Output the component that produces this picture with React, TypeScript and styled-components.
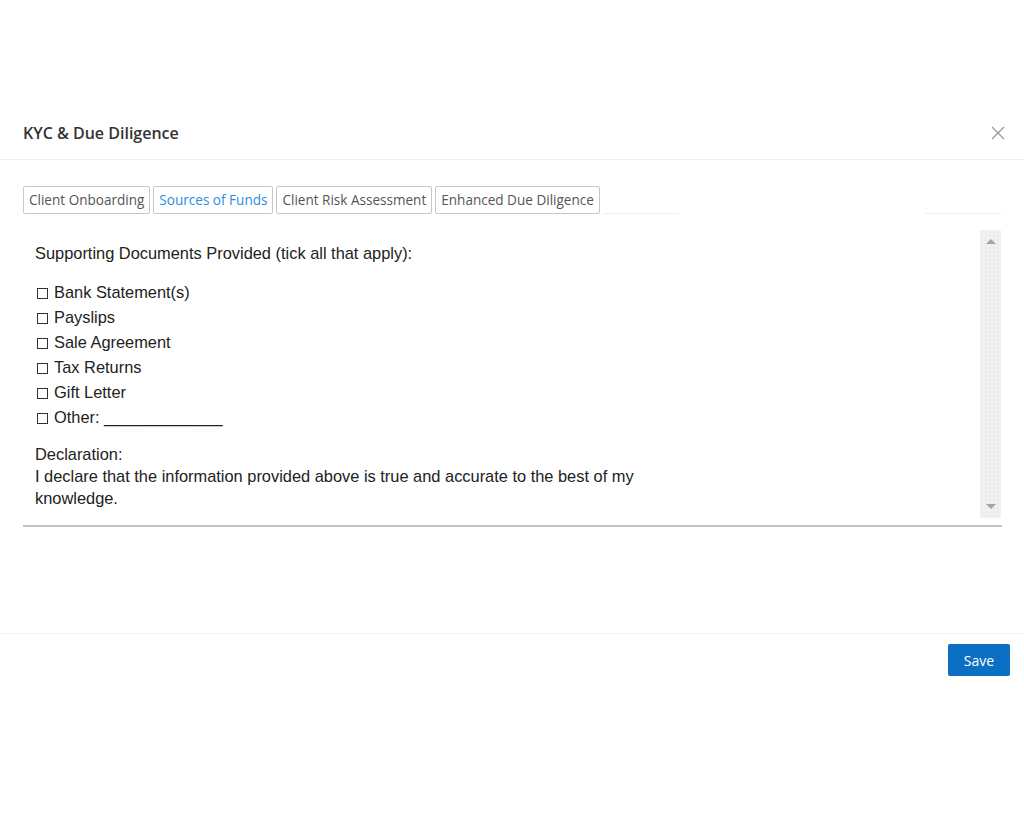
import styled, { createGlobalStyle } from "styled-components";

const GlobalStyle = createGlobalStyle`
  html, body {
    margin: 0;
    padding: 0;
    background: #fff;
  }
  body {
    font-family: "Open Sans", "Noto Sans", sans-serif;
  }
`;

const Page = styled.div`
  width: 1024px;
  height: 825px;
  padding-top: 107px;
  box-sizing: border-box;
`;

const Header = styled.div`
  height: 53px;
  display: flex;
  align-items: center;
  justify-content: space-between;
  padding: 0 18px 0 23px;
  border-bottom: 1px solid #f0f0f0;
  box-sizing: border-box;
`;

const Title = styled.h2`
  margin: 0;
  font-size: 16px;
  font-weight: 600;
  color: #333;
`;

const CloseButton = styled.button`
  border: 0;
  background: none;
  padding: 0;
  width: 16px;
  height: 16px;
  display: flex;
  align-items: center;
  justify-content: center;
  cursor: pointer;
`;

const Body = styled.div`
  padding: 26px 22px 0 23px;
  height: 474px;
  box-sizing: border-box;
  border-bottom: 1px solid #f0f0f0;
`;

const TabStrip = styled.div`
  display: flex;
  gap: 3px;
  height: 28px;
`;

const Tab = styled.button<{ $active?: boolean }>`
  height: 28px;
  padding: 0 5px;
  border: 1px solid #c8c8c8;
  border-radius: 2px;
  background: #fff;
  font-family: "Open Sans", "Noto Sans", sans-serif;
  font-size: 13.55px;
  color: ${(p) => (p.$active ? "#2b8de6" : "#555")};
  cursor: pointer;
  white-space: nowrap;
`;

const TabFiller = styled.div`
  flex: 1;
  align-self: flex-end;
  height: 1px;
  background: linear-gradient(
    to right,
    #eeeeee 0 75px,
    transparent 75px 322px,
    #eeeeee 322px
  );
`;

const Panel = styled.div`
  margin-top: 16px;
  height: 297px;
  display: flex;
  border-bottom: 2px solid #c4c4c4;
  box-sizing: border-box;
`;

const PanelContent = styled.div`
  flex: 1;
  padding: 12px 12px 0 12px;
  font-family: "Liberation Sans", Arial, "DejaVu Sans", sans-serif;
  font-size: 16.4px;
  color: #222;
`;

const Lead = styled.p`
  margin: 0 0 16px;
  line-height: 22px;
`;

const CheckList = styled.ul`
  list-style: none;
  margin: 0 0 13px;
  padding: 0;
`;

const CheckItem = styled.li`
  height: 25px;
  line-height: 25px;
  white-space: nowrap;
`;

const Box = styled.span`
  display: inline-block;
  width: 11px;
  height: 11px;
  border: 1px solid #333;
  box-sizing: border-box;
  margin: 0 6px 0 2px;
  vertical-align: -1px;
`;

const Declaration = styled.p`
  margin: 0;
  line-height: 22px;
  max-width: 615px;
`;

const ScrollRail = styled.div`
  width: 21px;
  height: 288px;
  margin-right: 1px;
  background-color: #f1f1f1;
  background-image: radial-gradient(#e2e2e2 0.6px, transparent 0.8px);
  background-size: 4px 4px;
  display: flex;
  flex-direction: column;
  justify-content: space-between;
  align-items: center;
  padding: 9px 0;
  box-sizing: border-box;
`;

const Arrow = styled.span<{ $down?: boolean }>`
  width: 0;
  height: 0;
  border-left: 5px solid transparent;
  border-right: 5px solid transparent;
  ${(p) =>
    p.$down
      ? "border-top: 5px solid #a3a3a3;"
      : "border-bottom: 5px solid #a3a3a3;"}
`;

const Footer = styled.div`
  display: flex;
  justify-content: flex-end;
  padding: 10px 14px 0 0;
`;

const SaveButton = styled.button`
  width: 62px;
  height: 32px;
  border: 0;
  border-radius: 2px;
  background: #0b6fc4;
  color: #fff;
  font-family: "Open Sans", "Noto Sans", sans-serif;
  font-size: 14px;
  cursor: pointer;
`;

const tabs = [
  "Client Onboarding",
  "Sources of Funds",
  "Client Risk Assessment",
  "Enhanced Due Diligence",
];

const documents = [
  "Bank Statement(s)",
  "Payslips",
  "Sale Agreement",
  "Tax Returns",
  "Gift Letter",
  "Other: _____________",
];

export default function App() {
  return (
    <Page>
      <GlobalStyle />
      <Header>
        <Title>KYC &amp; Due Diligence</Title>
        <CloseButton aria-label="Close">
          <svg width="14" height="14" viewBox="0 0 14 14">
            <path
              d="M1 1L13 13M13 1L1 13"
              stroke="#9a9a9a"
              strokeWidth="1.4"
              fill="none"
            />
          </svg>
        </CloseButton>
      </Header>
      <Body>
        <TabStrip>
          {tabs.map((t) => (
            <Tab key={t} $active={t === "Sources of Funds"}>
              {t}
            </Tab>
          ))}
          <TabFiller />
        </TabStrip>
        <Panel>
          <PanelContent>
            <Lead>Supporting Documents Provided (tick all that apply):</Lead>
            <CheckList>
              {documents.map((d) => (
                <CheckItem key={d}>
                  <Box />
                  {d}
                </CheckItem>
              ))}
            </CheckList>
            <Declaration>
              Declaration:
              <br />I declare that the information provided above is true and
              accurate to the best of my knowledge.
            </Declaration>
          </PanelContent>
          <ScrollRail>
            <Arrow />
            <Arrow $down />
          </ScrollRail>
        </Panel>
      </Body>
      <Footer>
        <SaveButton>Save</SaveButton>
      </Footer>
    </Page>
  );
}
